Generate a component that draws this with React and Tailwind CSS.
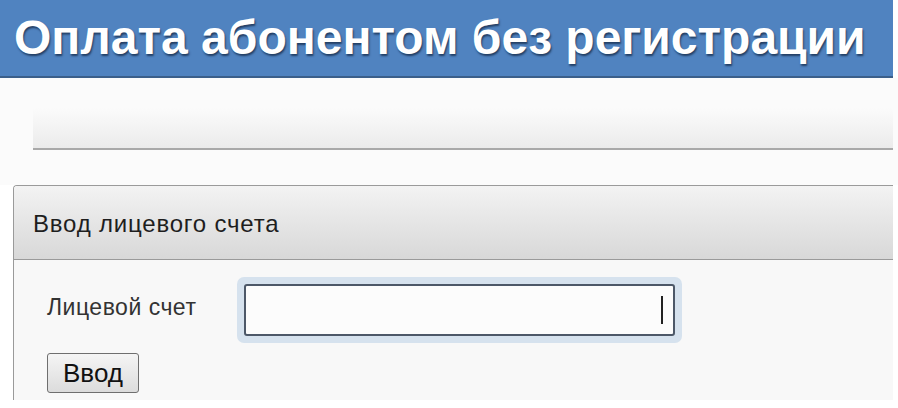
import React from 'react';

const font = { fontFamily: '"Liberation Sans", Arial, sans-serif' };

const App = () => {
	return (
		<div className="w-[898px] h-[408px] bg-white overflow-hidden flex flex-col" style={font}>
			<header className="w-[893px] h-[78px] shrink-0 bg-[#5083c0] border-b-2 border-[#3b5f8a] flex items-center pl-[14px]">
				<h1 className="text-[48px] leading-none font-bold text-white [text-shadow:1px_2px_2px_rgba(20,40,70,0.75)]">
					Оплата абонентом без регистрации
				</h1>
			</header>

			<div className="h-[107px] shrink-0 bg-[#fbfbfb] pt-[30px]">
				<div className="ml-[33px] w-[860px] h-[40px] bg-gradient-to-b from-[#fbfbfb] to-[#ebebeb]" />
				<div className="ml-[33px] w-[860px] h-[2px] bg-[#a9a9a9]" />
			</div>

			<section className="ml-[13px] w-[880px] flex-1 flex flex-col border-l border-t border-[#9a9a9a] rounded-tl-[4px] overflow-hidden">
				<div className="h-[74px] shrink-0 flex items-center pl-[19px] pt-[2px] border-b border-[#9a9a9a] bg-gradient-to-b from-[#f3f3f3] to-[#d8d8d8]">
					<h2 className="text-[24px] tracking-[0.8px] text-[#1e1e1e]">Ввод лицевого счета</h2>
				</div>

				<div className="flex-1 bg-[#f8f8f8] pl-[33px] pt-[17px]">
					<div className="flex items-center">
						<label className="w-[190px] text-[23px] tracking-[0.5px] text-[#333] pb-[6px]">Лицевой счет</label>
						<div className="p-[7px] rounded-[7px] bg-[#d6e2ee]">
							<div className="relative w-[431px] h-[52px] border-2 border-[#4d5868] rounded-[3px] bg-[#fcfcfc]">
								<span className="absolute right-[10px] top-[10px] w-[2px] h-[28px] bg-[#222]" />
							</div>
						</div>
					</div>

					<button className="mt-[10px] w-[92px] h-[40px] border border-[#6f6f6f] rounded-[3px] bg-gradient-to-b from-[#f5f5f5] to-[#dcdcdc] text-[26px] text-[#111] leading-none flex items-center justify-center">
						Ввод
					</button>
				</div>
			</section>
			<div className="h-[8px] shrink-0 bg-white" />
		</div>
	);
};

export default App;
